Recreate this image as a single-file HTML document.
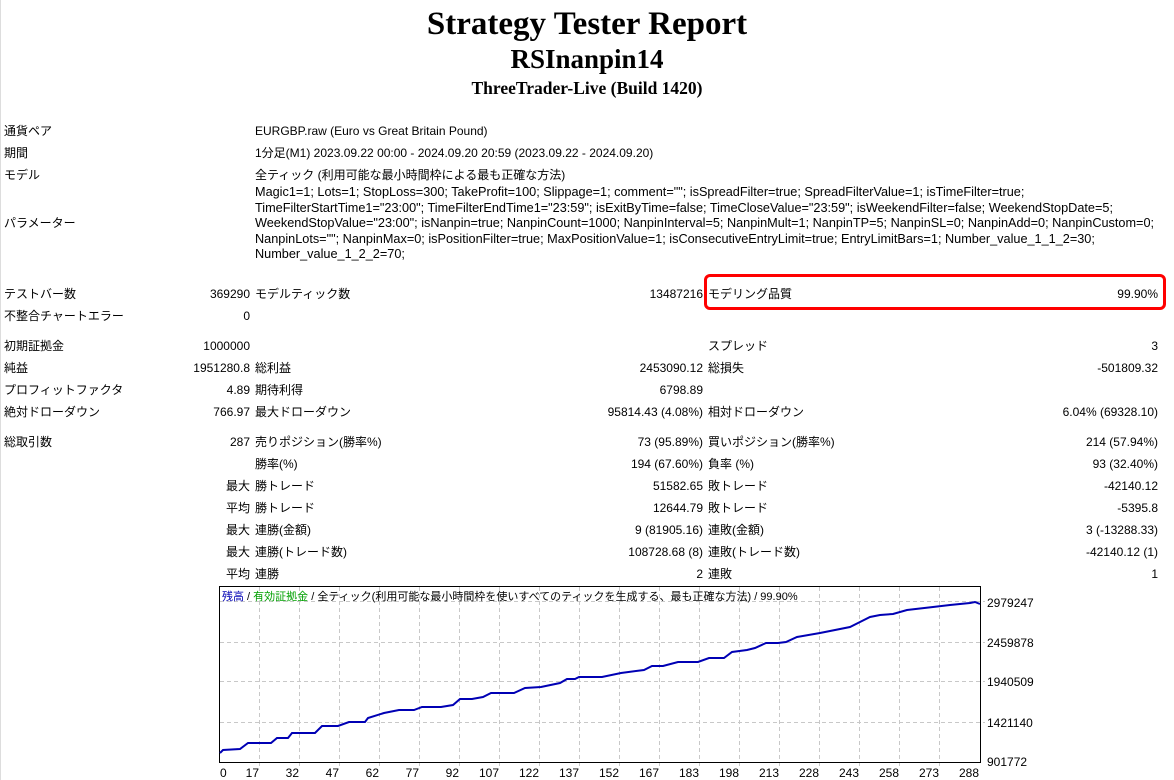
<!DOCTYPE html>
<html><head><meta charset="utf-8"><style>
body{margin:0;width:1174px;height:780px;background:#fff;position:relative;overflow:hidden;font-family:"Liberation Sans","Noto Sans CJK JP",sans-serif;font-size:12px;color:#000}
.t{position:absolute;white-space:nowrap;line-height:14px}
.r{text-align:right}
.h{position:absolute;left:0;width:1174px;text-align:center;font-family:"Liberation Serif",serif;font-weight:bold;white-space:nowrap}
.xl{position:absolute;width:40px;text-align:right}
</style></head><body>
<div style="position:absolute;left:0;top:0;width:1px;height:780px;background:#ddd"></div>
<div class="h" style="top:5px;font-size:33px;line-height:38px">Strategy Tester Report</div>
<div class="h" style="top:44px;font-size:27px;line-height:30px">RSInanpin14</div>
<div class="h" style="top:78px;font-size:17.5px;line-height:20px">ThreeTrader-Live (Build 1420)</div>

<div class="t" style="left:4px;top:124px">通貨ペア</div><div class="t" style="left:255px;top:124px">EURGBP.raw (Euro vs Great Britain Pound)</div>
<div class="t" style="left:4px;top:146px">期間</div><div class="t" style="left:255px;top:146px">1分足(M1) 2023.09.22 00:00 - 2024.09.20 20:59 (2023.09.22 - 2024.09.20)</div>
<div class="t" style="left:4px;top:168px">モデル</div><div class="t" style="left:255px;top:168px">全ティック (利用可能な最小時間枠による最も正確な方法)</div>
<div class="t" style="left:4px;top:216px">パラメーター</div>
<div class="t" style="left:255px;top:185px;line-height:15.5px;font-size:12.7px">Magic1=1; Lots=1; StopLoss=300; TakeProfit=100; Slippage=1; comment=""; isSpreadFilter=true; SpreadFilterValue=1; isTimeFilter=true;<br>TimeFilterStartTime1="23:00"; TimeFilterEndTime1="23:59"; isExitByTime=false; TimeCloseValue="23:59"; isWeekendFilter=false; WeekendStopDate=5;<br>WeekendStopValue="23:00"; isNanpin=true; NanpinCount=1000; NanpinInterval=5; NanpinMult=1; NanpinTP=5; NanpinSL=0; NanpinAdd=0; NanpinCustom=0;<br>NanpinLots=""; NanpinMax=0; isPositionFilter=true; MaxPositionValue=1; isConsecutiveEntryLimit=true; EntryLimitBars=1; Number_value_1_1_2=30;<br>Number_value_1_2_2=70;</div>

<div class="t" style="left:4px;top:287px">テストバー数</div><div class="t r" style="left:150px;width:100px;top:287px">369290</div><div class="t" style="left:255px;top:287px">モデルティック数</div><div class="t r" style="left:500px;width:203px;top:287px">13487216</div><div class="t" style="left:708px;top:287px">モデリング品質</div><div class="t r" style="left:1000px;width:158px;top:287px">99.90%</div>
<div style="position:absolute;left:704px;top:274px;width:456px;height:30px;border:3px solid #f00;border-radius:6px"></div>
<div class="t" style="left:4px;top:309px">不整合チャートエラー</div><div class="t r" style="left:150px;width:100px;top:309px">0</div>

<div class="t" style="left:4px;top:339px">初期証拠金</div><div class="t r" style="left:150px;width:100px;top:339px">1000000</div><div class="t" style="left:708px;top:339px">スプレッド</div><div class="t r" style="left:1000px;width:158px;top:339px">3</div>
<div class="t" style="left:4px;top:361px">純益</div><div class="t r" style="left:150px;width:100px;top:361px">1951280.8</div><div class="t" style="left:255px;top:361px">総利益</div><div class="t r" style="left:500px;width:203px;top:361px">2453090.12</div><div class="t" style="left:708px;top:361px">総損失</div><div class="t r" style="left:1000px;width:158px;top:361px">-501809.32</div>
<div class="t" style="left:4px;top:383px">プロフィットファクタ</div><div class="t r" style="left:150px;width:100px;top:383px">4.89</div><div class="t" style="left:255px;top:383px">期待利得</div><div class="t r" style="left:500px;width:203px;top:383px">6798.89</div>
<div class="t" style="left:4px;top:405px">絶対ドローダウン</div><div class="t r" style="left:150px;width:100px;top:405px">766.97</div><div class="t" style="left:255px;top:405px">最大ドローダウン</div><div class="t r" style="left:500px;width:203px;top:405px">95814.43 (4.08%)</div><div class="t" style="left:708px;top:405px">相対ドローダウン</div><div class="t r" style="left:1000px;width:158px;top:405px">6.04% (69328.10)</div>

<div class="t" style="left:4px;top:435px">総取引数</div><div class="t r" style="left:150px;width:100px;top:435px">287</div><div class="t" style="left:255px;top:435px">売りポジション(勝率%)</div><div class="t r" style="left:500px;width:203px;top:435px">73 (95.89%)</div><div class="t" style="left:708px;top:435px">買いポジション(勝率%)</div><div class="t r" style="left:1000px;width:158px;top:435px">214 (57.94%)</div>
<div class="t" style="left:255px;top:457px">勝率(%)</div><div class="t r" style="left:500px;width:203px;top:457px">194 (67.60%)</div><div class="t" style="left:708px;top:457px">負率 (%)</div><div class="t r" style="left:1000px;width:158px;top:457px">93 (32.40%)</div>
<div class="t r" style="left:150px;width:100px;top:479px">最大</div><div class="t" style="left:255px;top:479px">勝トレード</div><div class="t r" style="left:500px;width:203px;top:479px">51582.65</div><div class="t" style="left:708px;top:479px">敗トレード</div><div class="t r" style="left:1000px;width:158px;top:479px">-42140.12</div>
<div class="t r" style="left:150px;width:100px;top:501px">平均</div><div class="t" style="left:255px;top:501px">勝トレード</div><div class="t r" style="left:500px;width:203px;top:501px">12644.79</div><div class="t" style="left:708px;top:501px">敗トレード</div><div class="t r" style="left:1000px;width:158px;top:501px">-5395.8</div>
<div class="t r" style="left:150px;width:100px;top:523px">最大</div><div class="t" style="left:255px;top:523px">連勝(金額)</div><div class="t r" style="left:500px;width:203px;top:523px">9 (81905.16)</div><div class="t" style="left:708px;top:523px">連敗(金額)</div><div class="t r" style="left:1000px;width:158px;top:523px">3 (-13288.33)</div>
<div class="t r" style="left:150px;width:100px;top:545px">最大</div><div class="t" style="left:255px;top:545px">連勝(トレード数)</div><div class="t r" style="left:500px;width:203px;top:545px">108728.68 (8)</div><div class="t" style="left:708px;top:545px">連敗(トレード数)</div><div class="t r" style="left:1000px;width:158px;top:545px">-42140.12 (1)</div>
<div class="t r" style="left:150px;width:100px;top:567px">平均</div><div class="t" style="left:255px;top:567px">連勝</div><div class="t r" style="left:500px;width:203px;top:567px">2</div><div class="t" style="left:708px;top:567px">連敗</div><div class="t r" style="left:1000px;width:158px;top:567px">1</div>

<svg style="position:absolute;left:0;top:0" width="1174" height="780">
<g stroke="#c8c8c8" stroke-dasharray="4,3" stroke-width="1">
<line x1="259.5" y1="587" x2="259.5" y2="766"/><line x1="299.5" y1="587" x2="299.5" y2="766"/><line x1="339.5" y1="587" x2="339.5" y2="766"/><line x1="379.5" y1="587" x2="379.5" y2="766"/><line x1="419.5" y1="587" x2="419.5" y2="766"/><line x1="459.5" y1="587" x2="459.5" y2="766"/><line x1="499.5" y1="587" x2="499.5" y2="766"/><line x1="539.5" y1="587" x2="539.5" y2="766"/><line x1="579.5" y1="587" x2="579.5" y2="766"/><line x1="619.5" y1="587" x2="619.5" y2="766"/><line x1="659.5" y1="587" x2="659.5" y2="766"/><line x1="699.5" y1="587" x2="699.5" y2="766"/><line x1="739.5" y1="587" x2="739.5" y2="766"/><line x1="779.5" y1="587" x2="779.5" y2="766"/><line x1="819.5" y1="587" x2="819.5" y2="766"/><line x1="859.5" y1="587" x2="859.5" y2="766"/><line x1="899.5" y1="587" x2="899.5" y2="766"/><line x1="939.5" y1="587" x2="939.5" y2="766"/>
<line x1="220" y1="601.5" x2="985" y2="601.5"/><line x1="220" y1="642.5" x2="985" y2="642.5"/><line x1="220" y1="681.5" x2="985" y2="681.5"/><line x1="220" y1="722.5" x2="985" y2="722.5"/>
</g>
<rect x="219.5" y="586.5" width="761" height="176" fill="none" stroke="#000"/>
<polyline fill="none" stroke="#0000b4" stroke-width="2" points="220,753 223,750 240,749 248,743 271,743 277,738 288,738 292,733 315,733 322,726 338,726 349,722 365,722 368,718 384,713 399,710 414,710 422,707 441,707 453,705 460,699 472,699 483,697 491,693 514,693 525,688 541,687 560,683 567,679 575,679 579,677 602,677 621,673 644,670 652,666 663,666 678,662 698,662 709,658 724,658 732,652 747,650 755,648 766,643 778,643 786,642 797,637 820,633 850,627 860,622 870,617 880,615 893,614 907,610 933,607 950,605 970,603 975,602 980,604"/>
</svg>
<div class="t" style="left:222px;top:590px;font-size:11px">
<span style="color:#0000b4">残高</span> / <span style="color:#00a000">有効証拠金</span> / 全ティック(利用可能な最小時間枠を使いすべてのティックを生成する、最も正確な方法) / 99.90%</div>
<div class="t" style="left:987px;top:596px">2979247</div>
<div class="t" style="left:987px;top:636px">2459878</div>
<div class="t" style="left:987px;top:675px">1940509</div>
<div class="t" style="left:987px;top:716px">1421140</div>
<div class="t" style="left:987px;top:755px">901772</div>
<div class="t" style="left:0;top:766px;width:1174px">
<span style="position:absolute;left:220px">0</span>
<span class="xl" style="left:219px">17</span><span class="xl" style="left:259px">32</span><span class="xl" style="left:299px">47</span><span class="xl" style="left:339px">62</span><span class="xl" style="left:379px">77</span><span class="xl" style="left:419px">92</span><span class="xl" style="left:459px">107</span><span class="xl" style="left:499px">122</span><span class="xl" style="left:539px">137</span><span class="xl" style="left:579px">152</span><span class="xl" style="left:619px">167</span><span class="xl" style="left:659px">183</span><span class="xl" style="left:699px">198</span><span class="xl" style="left:739px">213</span><span class="xl" style="left:779px">228</span><span class="xl" style="left:819px">243</span><span class="xl" style="left:859px">258</span><span class="xl" style="left:899px">273</span><span class="xl" style="left:939px">288</span></div>
</body></html>
